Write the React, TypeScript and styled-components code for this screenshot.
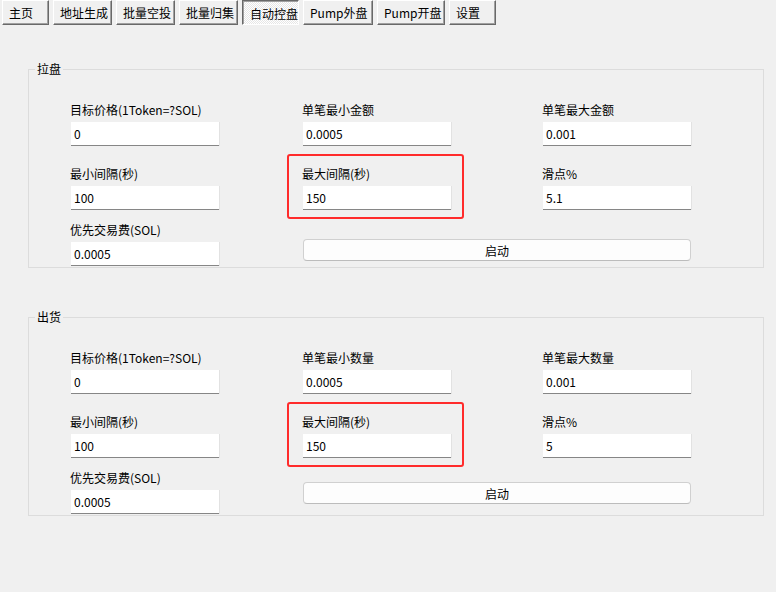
import styled, { createGlobalStyle } from "styled-components"

const GlobalStyle = createGlobalStyle`
  body {
    margin: 0;
    background: #f0f0f0;
    font-family: "Noto Sans CJK SC", "Noto Sans", sans-serif;
    font-size: 12px;
    color: #000;
  }
`

const Page = styled.div`
  width: 776px;
  min-height: 592px;
  background: #f0f0f0;
`

const TabBar = styled.div`
  display: flex;
  gap: 4px;
  padding: 0 2px;
  height: 25px;
`

const TabButton = styled.button<{ $active?: boolean; $w: number }>`
  box-sizing: border-box;
  width: ${(p) => p.$w}px;
  height: 25px;
  margin: 0;
  padding: ${(p) => (p.$active ? "2px 0 0 7px" : "0 0 0 6px")};
  text-align: left;
  font-family: inherit;
  font-size: 12px;
  color: #000;
  border: 1px solid;
  border-color: ${(p) =>
    p.$active ? "#696969 #ffffff #ffffff #696969" : "#ffffff #696969 #696969 #ffffff"};
  box-shadow: ${(p) =>
    p.$active ? "inset 1px 1px 0 #a0a0a0" : "inset -1px -1px 0 #a0a0a0"};
  background: ${(p) =>
    p.$active
      ? "repeating-conic-gradient(#ffffff 0 25%, #e6e6e6 0 50%) 0 0 / 2px 2px"
      : "#f0f0f0"};
`

const Content = styled.div`
  padding: 36px 0 0 28px;
`

const Group = styled.fieldset<{ $gap?: number }>`
  box-sizing: border-box;
  width: 736px;
  margin: ${(p) => p.$gap ?? 0}px 0 0 0;
  padding: 25px 0 1px 42px;
  border: 1px solid #dcdcdc;
  min-width: 0;
`

const GroupTitle = styled.legend`
  margin-left: -36px;
  padding: 0 2px;
  font-size: 12px;
  line-height: 16px;
`

const FieldGrid = styled.div`
  display: grid;
  grid-template-columns: 232px 240px 148px;
  grid-template-rows: 64px 56px 44px;
  align-items: start;
`

const Field = styled.div`
  position: relative;
  display: flex;
  flex-direction: column;
`

const FieldLabel = styled.label`
  font-size: 12px;
  line-height: 16px;
  margin-bottom: 4px;
  margin-left: -1px;
  white-space: nowrap;
`

const TextInput = styled.input`
  box-sizing: border-box;
  width: 148px;
  height: 24px;
  margin: 0;
  padding: 0 3px;
  border: none;
  border-bottom: 1px solid #868686;
  box-shadow: 1px 0 0 #e2e2e2;
  background: #fff;
  font-family: inherit;
  font-size: 12px;
  color: #000;
  outline: none;
`

const StartButton = styled.button<{ $top: number }>`
  grid-column: 2 / 4;
  box-sizing: border-box;
  height: 22px;
  margin-top: ${(p) => p.$top}px;
  padding: 0;
  border: 1px solid #d0d0d0;
  border-bottom-color: #bcbcbc;
  border-radius: 4px;
  background: #fdfdfd;
  font-family: inherit;
  font-size: 12px;
  color: #000;
`

const Highlight = styled.div`
  position: absolute;
  left: -16px;
  top: -12px;
  width: 177px;
  height: 65px;
  box-sizing: border-box;
  border: 2px solid #ff2b2b;
  border-radius: 3px;
  pointer-events: none;
`

const tabs = [
  { label: "主页", w: 47 },
  { label: "地址生成", w: 59 },
  { label: "批量空投", w: 59 },
  { label: "批量归集", w: 59 },
  { label: "自动控盘", w: 57, active: true },
  { label: "Pump外盘", w: 70 },
  { label: "Pump开盘", w: 68 },
  { label: "设置", w: 47 },
]

type FieldDef = { label: string; value: string; marked?: boolean }

function FormField({ label, value, marked }: FieldDef) {
  return (
    <Field>
      {marked && <Highlight />}
      <FieldLabel>{label}</FieldLabel>
      <TextInput defaultValue={value} />
    </Field>
  )
}

function Section({
  title,
  fields,
  gap,
  buttonTop,
}: {
  title: string
  fields: FieldDef[]
  gap?: number
  buttonTop: number
}) {
  return (
    <Group $gap={gap}>
      <GroupTitle>{title}</GroupTitle>
      <FieldGrid>
        {fields.map((f) => (
          <FormField key={f.label} {...f} />
        ))}
        <StartButton $top={buttonTop}>启动</StartButton>
      </FieldGrid>
    </Group>
  )
}

const pullFields: FieldDef[] = [
  { label: "目标价格(1Token=?SOL)", value: "0" },
  { label: "单笔最小金额", value: "0.0005" },
  { label: "单笔最大金额", value: "0.001" },
  { label: "最小间隔(秒)", value: "100" },
  { label: "最大间隔(秒)", value: "150", marked: true },
  { label: "滑点%", value: "5.1" },
  { label: "优先交易费(SOL)", value: "0.0005" },
]

const sellFields: FieldDef[] = [
  { label: "目标价格(1Token=?SOL)", value: "0" },
  { label: "单笔最小数量", value: "0.0005" },
  { label: "单笔最大数量", value: "0.001" },
  { label: "最小间隔(秒)", value: "100" },
  { label: "最大间隔(秒)", value: "150", marked: true },
  { label: "滑点%", value: "5" },
  { label: "优先交易费(SOL)", value: "0.0005" },
]

export default function App() {
  return (
    <Page>
      <GlobalStyle />
      <TabBar>
        {tabs.map((t) => (
          <TabButton key={t.label} $w={t.w} $active={t.active}>
            {t.label}
          </TabButton>
        ))}
      </TabBar>
      <Content>
        <Section title="拉盘" fields={pullFields} buttonTop={17} />
        <Section title="出货" fields={sellFields} gap={41} buttonTop={12} />
      </Content>
    </Page>
  )
}
